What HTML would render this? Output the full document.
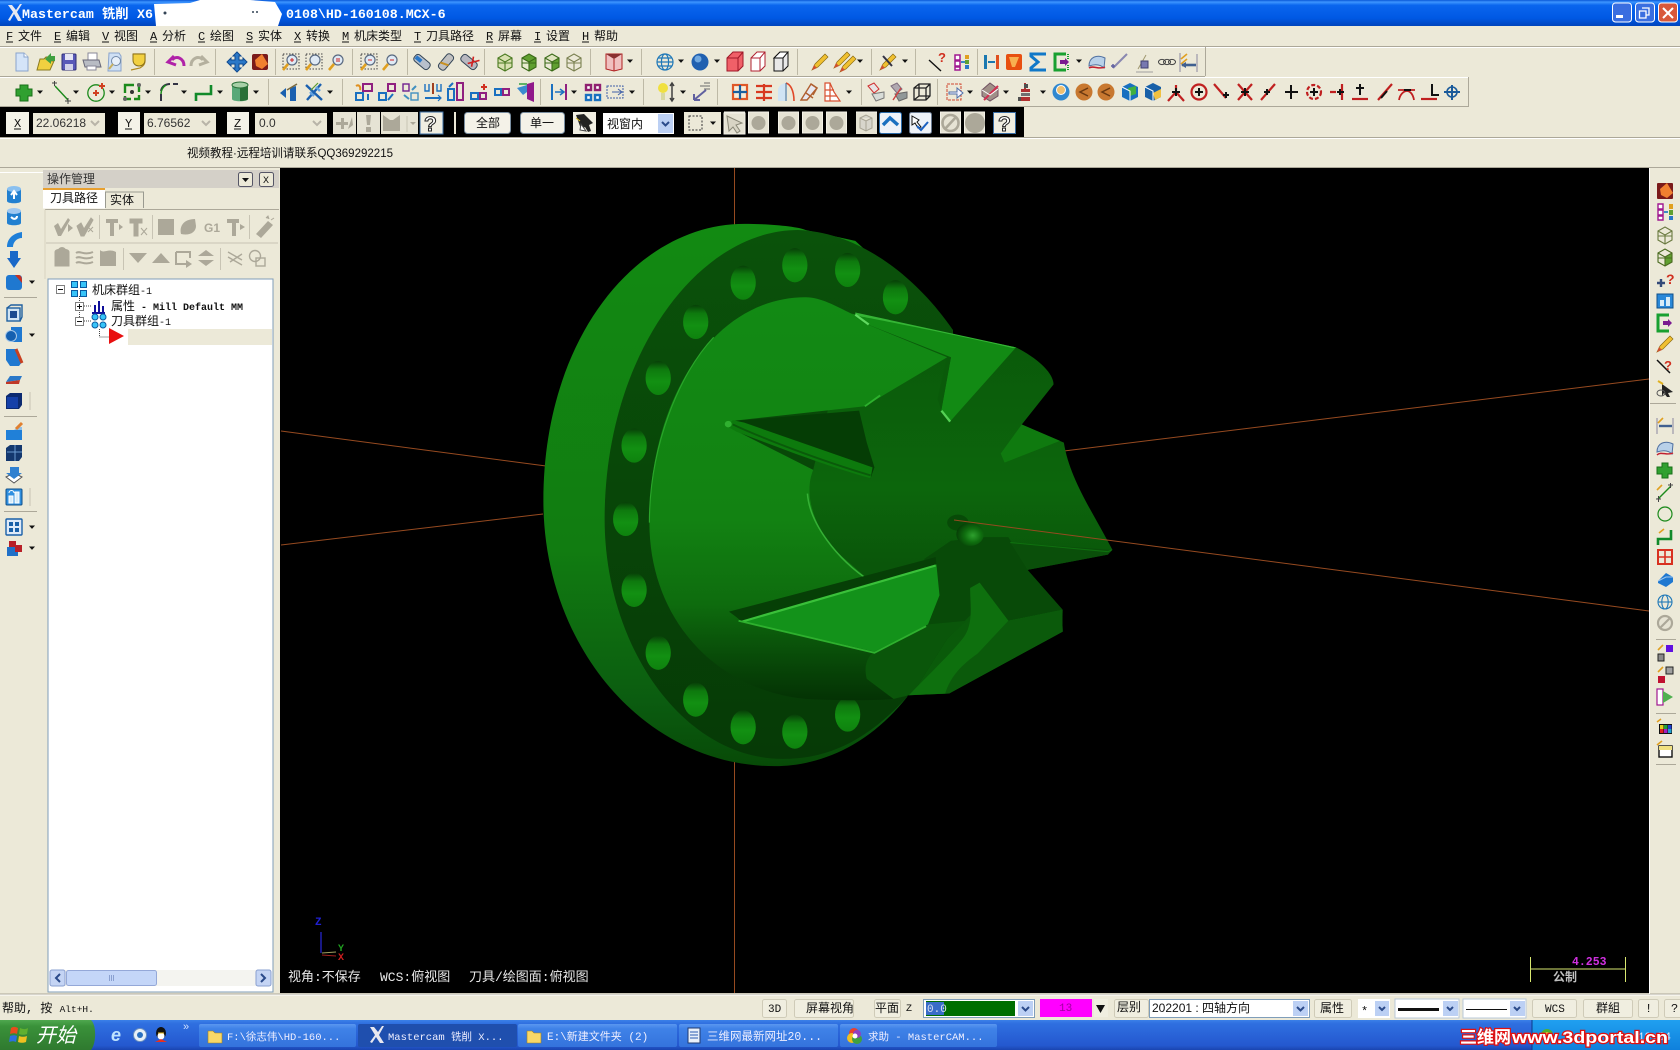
<!DOCTYPE html>
<html><head><meta charset="utf-8"><title>Mastercam 铣削 X6</title>
<style>
html,body{margin:0;padding:0;background:#ece9d8;overflow:hidden}
svg{display:block}
text{font-family:"Liberation Mono","Noto Sans CJK SC",monospace;font-size:12px;fill:#111}
.s{font-family:"Liberation Sans","Noto Sans CJK SC",sans-serif}
.t{font-weight:bold;font-size:13.3px;fill:#fff}
.w{fill:#e8e8e8;font-size:13px}
</style></head><body>
<svg width="1680" height="1050" viewBox="0 0 1680 1050" xmlns="http://www.w3.org/2000/svg">
<defs>
<linearGradient id="tb" x1="0" y1="0" x2="0" y2="1"><stop offset="0" stop-color="#0a58d8"/><stop offset=".08" stop-color="#3d95ff"/><stop offset=".2" stop-color="#0a66ee"/><stop offset=".7" stop-color="#0058e4"/><stop offset="1" stop-color="#0044bc"/></linearGradient>
<linearGradient id="tk" x1="0" y1="0" x2="0" y2="1"><stop offset="0" stop-color="#3a80e8"/><stop offset=".12" stop-color="#2f6fe0"/><stop offset=".85" stop-color="#2458cf"/><stop offset="1" stop-color="#1a45b0"/></linearGradient>
<linearGradient id="tb2" x1="0" y1="0" x2="0" y2="1"><stop offset="0" stop-color="#5a97f0"/><stop offset=".2" stop-color="#3f82e8"/><stop offset="1" stop-color="#3473dc"/></linearGradient>
<linearGradient id="st" x1="0" y1="0" x2="0" y2="1"><stop offset="0" stop-color="#4fa84f"/><stop offset=".2" stop-color="#3a923a"/><stop offset="1" stop-color="#2f7a2f"/></linearGradient>
<linearGradient id="try" x1="0" y1="0" x2="0" y2="1"><stop offset="0" stop-color="#20a0f0"/><stop offset="1" stop-color="#0f80dc"/></linearGradient>
<linearGradient id="rim" gradientUnits="userSpaceOnUse" x1="0" y1="40" x2="0" y2="1530"><stop offset="0" stop-color="#128a12"/><stop offset=".6" stop-color="#117c11"/><stop offset=".88" stop-color="#0b5c10"/><stop offset="1" stop-color="#074a07"/></linearGradient>
<linearGradient id="face" gradientUnits="userSpaceOnUse" x1="0" y1="55" x2="0" y2="1510"><stop offset="0" stop-color="#0a520a"/><stop offset="1" stop-color="#063a06"/></linearGradient>
<linearGradient id="hub" gradientUnits="userSpaceOnUse" x1="0" y1="240" x2="0" y2="1350"><stop offset="0" stop-color="#128a14"/><stop offset=".55" stop-color="#128212"/><stop offset=".76" stop-color="#0e6c0e"/><stop offset=".92" stop-color="#074407"/><stop offset="1" stop-color="#043204"/></linearGradient>
<linearGradient id="body" gradientUnits="userSpaceOnUse" x1="0" y1="300" x2="0" y2="1340"><stop offset="0" stop-color="#0a580a"/><stop offset=".45" stop-color="#0c660c"/><stop offset=".65" stop-color="#0a560a"/><stop offset="1" stop-color="#0a5c0a"/></linearGradient>
<linearGradient id="hole" x1="0" y1="0" x2="0" y2="1"><stop offset="0" stop-color="#073f07"/><stop offset=".25" stop-color="#0e7a0e"/><stop offset=".6" stop-color="#129012"/><stop offset="1" stop-color="#0e820e"/></linearGradient>
<radialGradient id="ball" cx=".6" cy=".55" r=".6"><stop offset="0" stop-color="#2ea02e"/><stop offset=".5" stop-color="#0f6e0f"/><stop offset="1" stop-color="#063f06"/></radialGradient>
<path id="a" d="M-3,-1.5h6l-3,3.4z" fill="#111"/>
<ellipse id="h" cx="0" cy="0" rx="33" ry="47" fill="url(#hole)"/>
<g id="wire" fill="none" stroke-width="1.1"><path d="M-7,-4L0,-8L7,-4V5L0,9L-7,5ZM-7,-4L0,0L7,-4M0,0V9M-7,1L7,1"/></g>
<g id="mag"><circle cx="1" cy="-2" r="5" fill="#dfeaf5" stroke="#5a6a80" stroke-width="1.2"/><path d="M-3,2L-8,8" stroke="#e0a020" stroke-width="2.6"/></g>
<g id="pen"><path d="M-8,8L-5,2L5,-8L8,-5L-2,5Z" fill="#f0c030" stroke="#8a6a10" stroke-width=".7"/><path d="M-8,8L-6,3L-3,6Z" fill="#d05030"/></g>
<g id="gbk"><rect x="-10" y="-11" width="20" height="21" fill="#e6e3d4" stroke="#f4f2e8"/><circle cy="0" r="7" fill="#aca899"/></g>
<g id="wh"><rect x="-11" y="-11" width="22" height="21" fill="#f0eee2" stroke="#d8d4c0"/></g>
</defs>

<!-- base -->
<rect width="1680" height="1050" fill="#ece9d8"/>

<!-- title bar -->
<rect width="1680" height="26" fill="url(#tb)"/>
<path d="M8,20L13,12L8,5H12L16,10L20,4H22L17,12L22,21H18L14,14L10,21Z" fill="#e8e8f0"/>
<text x="22" y="18" class="t">Mastercam</text><text x="102" y="18" class="t">铣削</text><text x="137" y="18" class="t">X6</text>
<text x="286" y="18" class="t">0108\HD-160108.MCX-6</text>
<path d="M154,4L190,3L200,0H250L275,2L282,14L278,26H156Z" fill="#fff"/>
<circle cx="165" cy="13" r="1.5" fill="#345"/><circle cx="253" cy="12" r="1" fill="#345"/><circle cx="257" cy="12" r="1" fill="#345"/>
<g stroke="#fff" stroke-width="1">
<rect x="1612.5" y="3" width="19" height="19" rx="3" fill="#3a6ee0"/>
<rect x="1635.5" y="3" width="19" height="19" rx="3" fill="#3a6ee0"/>
<rect x="1658.5" y="3" width="19" height="19" rx="3" fill="#d8583a"/></g>
<rect x="1616" y="15" width="7" height="3" fill="#fff"/>
<path d="M1642,8h7v7h-3M1639.5,11h6.5v7h-6.5z" fill="none" stroke="#fff" stroke-width="1.3"/>
<path d="M1663,8L1673,18M1673,8L1663,18" stroke="#fff" stroke-width="2"/>

<!-- menu -->
<g>
<text x="6" y="40">F</text><text x="18" y="40">文件</text>
<text x="54" y="40">E</text><text x="66" y="40">编辑</text>
<text x="102" y="40">V</text><text x="114" y="40">视图</text>
<text x="150" y="40">A</text><text x="162" y="40">分析</text>
<text x="198" y="40">C</text><text x="210" y="40">绘图</text>
<text x="246" y="40">S</text><text x="258" y="40">实体</text>
<text x="294" y="40">X</text><text x="306" y="40">转换</text>
<text x="342" y="40">M</text><text x="354" y="40">机床类型</text>
<text x="414" y="40">T</text><text x="426" y="40">刀具路径</text>
<text x="486" y="40">R</text><text x="498" y="40">屏幕</text>
<text x="534" y="40">I</text><text x="546" y="40">设置</text>
<text x="582" y="40">H</text><text x="594" y="40">帮助</text>
</g>
<path d="M6,42h7M54,42h7M102,42h7M150,42h7M198,42h7M246,42h7M294,42h7M342,42h7M414,42h7M486,42h7M534,42h7M582,42h7" stroke="#111" stroke-width="1"/>

<!-- toolbar lines -->
<path d="M0,46.5H1680" stroke="#aca899"/><path d="M0,47.5H1680" stroke="#fff"/>
<path d="M0,76.5H1205M1205.5,47V76" stroke="#aca899"/>
<path d="M0,77.5H1468" stroke="#fff"/>
<path d="M0,106.5H1468M1468.5,77V107" stroke="#aca899"/>
<path d="M154.5,49V75M215.5,49V75M275.5,49V75M352.5,49V75M407.5,49V75M484.5,49V75M590.5,49V75M641.5,49V75M797.5,49V75M871.5,49V75M915.5,49V75M977.5,49V75" stroke="#bdb9a6"/>
<path d="M268.5,79V105M342.5,79V105M540.5,79V105M643.5,79V105M717.5,79V105M861.5,79V105M937.5,79V105" stroke="#bdb9a6"/>

<!-- toolbar 1 icons -->
<g transform="translate(22,62)"><path d="M-6,-9h8l4,4v14h-12z" fill="#d4e4f8" stroke="#8aa4cc"/><path d="M2,-9v4h4" fill="#fff" stroke="#8aa4cc"/></g>
<g transform="translate(46,62)"><path d="M-9,8L-6,-3H-2L0,-5H4V-1H8L4,8Z" fill="#f0d040" stroke="#8a7a20"/><path d="M-1,-3L5,-9V-6L9,-6V-1L5,-1V2Z" fill="#40a040"/></g>
<g transform="translate(69,62)"><rect x="-7" y="-8" width="14" height="16" rx="1" fill="#5858b8" stroke="#303078"/><rect x="-4" y="-8" width="8" height="6" fill="#e4e4f4"/><rect x="-4" y="2" width="8" height="6" fill="#d0d0e8"/></g>
<g transform="translate(92,62)"><rect x="-4" y="-9" width="9" height="7" fill="#fff" stroke="#889"/><path d="M-9,-2H7L9,5H-7Z" fill="#b8bcc4" stroke="#667"/><rect x="-5" y="4" width="9" height="4" fill="#fff" stroke="#889"/></g>
<g transform="translate(115,62)"><path d="M-6,-9h10l2,3v15h-13z" fill="#cfe0f4" stroke="#8aa4cc"/><circle cx="1" cy="-1" r="4.5" fill="#e8f0fa" stroke="#7088a8"/><path d="M-2,2L-6,7" stroke="#c8b060" stroke-width="2"/></g>
<g transform="translate(139,62)"><path d="M-6,-8H6V-1C6,4 2,5 1,6L-8,8" fill="none" stroke="#b08a20" stroke-width="1.2"/><path d="M-6,-8H6V-2C6,2 3,4 0,4C-3,4 -6,2 -6,-2Z" fill="#f2d040" stroke="#8a7018"/></g>
<path d="M184,66C184,58 176,55 172,60M176,65L168,62L174,56" fill="none" stroke="#b022a8" stroke-width="3"/>
<path d="M191,66C191,58 199,55 203,60M199,65L207,62L201,56" fill="none" stroke="#b4b09e" stroke-width="3"/>
<g transform="translate(237,62)"><path d="M0,-10L4,-6H2V-2H6V-4L10,0L6,4V2H2V6H4L0,10L-4,6H-2V2H-6V4L-10,0L-6,-4V-2H-2V-6H-4Z" fill="#2a78c8" stroke="#104a90"/></g>
<g transform="translate(260,62)"><rect x="-8" y="-8" width="16" height="16" rx="2" fill="#7a1a1a"/><path d="M-5,-2L2,-8L8,2L2,7L-4,4Z" fill="#f08030"/></g>
<g transform="translate(291,62)"><rect x="-8" y="-8" width="16" height="15" fill="none" stroke="#444" stroke-dasharray="1.5 1.5"/><use href="#mag"/><path d="M-1,-2h4M1,-4v4" stroke="#d02020"/></g>
<g transform="translate(314,62)"><rect x="-8" y="-8" width="16" height="15" fill="none" stroke="#444" stroke-dasharray="1.5 1.5"/><use href="#mag"/></g>
<g transform="translate(337,62)"><use href="#mag"/><path d="M-1,-3h4M-1,-1h4" stroke="#d02020"/></g>
<g transform="translate(369,62)"><rect x="-8" y="-8" width="16" height="15" fill="none" stroke="#444" stroke-dasharray="1.5 1.5"/><use href="#mag"/><path d="M-1,-2h4" stroke="#d02020"/></g>
<g transform="translate(391,62)"><use href="#mag"/><path d="M-1,-2h4" stroke="#d02020"/></g>
<g transform="translate(422,62) rotate(40)"><rect x="-9" y="-4" width="18" height="8" rx="3" fill="#b8c0cc" stroke="#345"/><rect x="-8" y="-2" width="7" height="4" fill="#2a78c8"/></g>
<g transform="translate(446,62) rotate(-50)"><rect x="-9" y="-4" width="18" height="8" rx="3" fill="#c0c0c0" stroke="#345"/><path d="M-4,-4L-1,4" stroke="#c89020" stroke-width="2"/></g>
<g transform="translate(469,62) rotate(40)"><rect x="-9" y="-4" width="18" height="8" rx="3" fill="#b8b8c0" stroke="#345"/><path d="M0,-7L5,2M7,-8L0,2" stroke="#d02020" stroke-width="1.6"/></g>
<g transform="translate(505,62)"><path d="M-7,-4L0,-8L7,-4V5L0,9L-7,5Z" fill="#d8e0b0"/><use href="#wire" stroke="#4a7a20"/></g>
<g transform="translate(529,62)"><path d="M-7,-4L0,-8L7,-4V5L0,9L-7,5Z" fill="#60a030"/><path d="M-7,-4L0,0V9L-7,5Z" fill="#e8ecd0"/><use href="#wire" stroke="#3a6a18"/></g>
<g transform="translate(552,62)"><path d="M0,0L7,-4V5L0,9Z" fill="#60a030"/><path d="M-7,-4L0,-8L7,-4L0,0Z" fill="#e0e4c0"/><use href="#wire" stroke="#3a6a18"/></g>
<g transform="translate(574,62)"><use href="#wire" stroke="#7a8050"/></g>
<g transform="translate(614,62)"><path d="M-8,-8H8V7L0,9L-8,7Z" fill="#f0c0c0" stroke="#b02020"/><path d="M-8,-8H8L0,-3Z" fill="#8a3030"/><path d="M0,-3V9" stroke="#b02020"/></g>
<use href="#a" x="630" y="61"/>
<g transform="translate(665,62)" fill="none" stroke="#1f78b8" stroke-width="1.2"><circle r="8"/><ellipse rx="3.6" ry="8"/><path d="M-8,0H8M-7,-4H7M-7,4H7"/></g>
<use href="#a" x="681" y="61"/>
<circle cx="700" cy="62" r="8.5" fill="#2060b0"/><circle cx="698" cy="59" r="3.5" fill="#70a8e0"/>
<use href="#a" x="717" y="61"/>
<path d="M727,58L733,52H743V66L738,71H727Z" fill="#f06068" stroke="#a01828"/><path d="M727,58H738V71M738,58L743,52" fill="none" stroke="#a01828"/>
<path d="M751,58L757,52H765V66L760,71H751Z" fill="#fff" stroke="#b02030"/><path d="M751,58H760V71M760,58L765,52" fill="none" stroke="#b02030"/>
<path d="M774,58L780,52H788V66L783,71H774Z" fill="#e8e8e8" stroke="#111"/><path d="M780,52L774,58H783L788,52ZM783,58V71" fill="#fff" stroke="#111"/>
<use href="#pen" transform="translate(820,62)"/>
<use href="#pen" transform="translate(842,60)"/><use href="#pen" transform="translate(848,64)"/>
<use href="#a" x="860" y="61"/>
<use href="#pen" transform="translate(888,62)"/><path d="M883,56L892,66" stroke="#334" stroke-width="2"/>
<use href="#a" x="905" y="61"/>
<g transform="translate(938,62)"><path d="M-9,-2L3,9" stroke="#111" stroke-width="1.4"/></g><text x="938" y="62" class="s" style="font-size:13px;font-weight:bold;fill:#d03020">?</text>
<g transform="translate(961,62)"><path d="M-6,-7h5v5h-5zM-6,-1h5v5h-5zM-6,5h5v3h-5z" fill="#fff" stroke="#a01890" stroke-width="1.5"/><path d="M4,-7h4v4h-4z" fill="#e0a020"/><path d="M4,-2h4v4h-4z" fill="#60a030"/><path d="M4,3h4v4h-4z" fill="#2a78c8"/><path d="M0,0h4" stroke="#1070c0" stroke-width="1.6"/></g>
<g transform="translate(991,62)"><rect x="-7" y="-7" width="3" height="14" fill="#1a78b0"/><rect x="5" y="-7" width="3" height="14" fill="#e05020"/><path d="M-3,0H4" stroke="#1a78b0" stroke-width="2"/></g>
<g transform="translate(1014,62)"><rect x="-8" y="-8" width="16" height="16" fill="#e85010" rx="2"/><path d="M-5,-5H5L1,5H-2Z" fill="#f8b050"/></g>
<path d="M1046,54H1031V56L1038,62L1031,68V70H1046" fill="none" stroke="#1078c8" stroke-width="3"/>
<g transform="translate(1062,62)"><path d="M4,-8H-7V8H4" fill="none" stroke="#18a030" stroke-width="3"/><path d="M-2,-2H3V-4L7,0L3,4V2H-2Z" fill="#7a1a90"/><path d="M6,-8V-3M6,3V8" stroke="#18a030" stroke-dasharray="1 1" stroke-width="2"/></g>
<use href="#a" x="1079" y="61"/>
<g transform="translate(1097,62)"><path d="M-8,4C-8,-5 0,-8 8,-4L7,6C3,2 -2,2 -8,4Z" fill="#b8d0e8" stroke="#5070a0"/><path d="M-8,6C-4,3 2,8 8,5" fill="none" stroke="#c02030" stroke-width="1.5"/></g>
<g transform="translate(1120,62)"><path d="M-7,6L7,-8" stroke="#8a88b0" stroke-width="2"/><path d="M-5,4h-4M-7,2v4" stroke="#6060a0" stroke-width="1.5"/></g>
<g transform="translate(1144,63)"><path d="M-8,9H9" stroke="#a0a0a0"/><path d="M-6,6L2,-8" stroke="#a09870"/><rect x="-3" y="-2" width="7" height="7" fill="#7878b0" stroke="#404070"/></g>
<g transform="translate(1166,62)" fill="none" stroke="#444"><ellipse cx="-4" rx="3.5" ry="2.6"/><ellipse cx="1" rx="3.5" ry="2.6"/><ellipse cx="6" rx="3.5" ry="2.6"/></g>
<g transform="translate(1189,62)"><path d="M-9,-9V10" stroke="#8a88a0"/><path d="M8,-8V10" stroke="#8a88a0"/><path d="M-8,2L-2,-3M-8,-3L-2,-8" stroke="#e0a020" stroke-width="1.6"/><path d="M-7,3H7" stroke="#406090" stroke-width="2.6"/><path d="M-3,0L-8,3L-3,6" fill="#406090"/></g>

<!-- toolbar 2 icons -->
<path d="M20,85h8v4h-0v0h4v7h-4v5h-8v-5h-4v-7h4z" fill="#30a030" stroke="#177017" transform="translate(0,0)"/>
<use href="#a" x="40" y="92"/>
<g transform="translate(61,92)"><path d="M-6,-6L7,8" stroke="#1b8a1b" stroke-width="1.4"/><path d="M-9,-9h5M-6.5,-11v5M4,9h6M7,6v6" stroke="#444" stroke-width="1"/></g>
<use href="#a" x="76" y="92"/>
<g transform="translate(96,93)"><circle r="8.2" fill="none" stroke="#1b8a1b" stroke-width="1.3"/><path d="M-3,0H3M0,-3V3" stroke="#d04020" stroke-width="2"/><path d="M3,-7H9M6,-10V-4" stroke="#d04020" stroke-width="2"/></g>
<use href="#a" x="112" y="92"/>
<g transform="translate(132,92)"><path d="M-7,-7H7V7H-7Z" fill="none" stroke="#1b8a1b" stroke-width="2.4" stroke-dasharray="9 3"/><circle r="2" fill="#333"/><circle cx="-7" cy="7" r="2" fill="#666"/><circle cx="7" cy="-7" r="2" fill="#666"/></g>
<use href="#a" x="148" y="92"/>
<path d="M161,101V94M161,91C162,86 166,84 170,84M173,84H178" fill="none" stroke="#334" stroke-width="2"/><path d="M161,94C161,90 163,87 166,85" fill="none" stroke="#1b8a1b" stroke-width="1.5"/>
<use href="#a" x="184" y="92"/>
<path d="M196,101V94H211V85" fill="none" stroke="#118a2a" stroke-width="2.6"/>
<use href="#a" x="220" y="92"/>
<g transform="translate(240,92)"><path d="M-8,-7V7C-8,10 8,10 8,7V-7Z" fill="#58a878"/><path d="M0,-6V9C4,9 8,8 8,7V-7Z" fill="#2a7038"/><ellipse cy="-7" rx="8" ry="3" fill="#a8d0a8" stroke="#2a7038"/></g>
<use href="#a" x="256" y="92"/>
<g transform="translate(289,92)"><path d="M-9,1L-3,-4V6ZM1,-4V9H7V-6Z" fill="#1a60b0"/><path d="M-2,-2L8,-8" stroke="#7a6a40" stroke-width="1.5"/></g>
<g transform="translate(314,92)" stroke-width="2.4"><path d="M-8,-7L8,8" stroke="#1a60b0"/><path d="M7,-8L-7,8" stroke="#1a60b0"/><path d="M-4,0L0,4M2,-5L6,-1" stroke="#60a0e0"/><path d="M4,-9L-3,-2" stroke="#5a9a30" stroke-width="1.2"/></g>
<use href="#a" x="330" y="92"/>
<g fill="none" stroke-width="2">
<g transform="translate(364,92)"><rect x="-1" y="-8" width="9" height="7" stroke="#902080"/><rect x="-8" y="1" width="7" height="7" stroke="#1a70c0"/><path d="M-8,-6C-5,-8 -3,-5 -4,-2" stroke="#e09020"/><path d="M4,2V8" stroke="#1a70c0"/></g>
<g transform="translate(387,92)"><rect x="1" y="-8" width="7" height="7" stroke="#902080"/><rect x="-8" y="1" width="7" height="7" stroke="#1a70c0"/><path d="M1,8L6,2" stroke="#1a70c0"/></g>
<g transform="translate(411,92)"><rect x="-8" y="-8" width="6" height="7" stroke="#702090" stroke-width="1.4"/><rect x="0" y="1" width="7" height="7" stroke="#4090c0" stroke-width="1.4"/><path d="M-7,3L-2,7M5,-6L1,-2" stroke="#4090c0"/></g>
<g transform="translate(433,92)"><path d="M-8,-8V-1H-4V-8M4,-8V-1H8V-8" stroke="#1a70c0" stroke-width="1.4"/><path d="M0,-9V2" stroke="#a04020"/><path d="M-8,6H8" stroke="#1a70c0"/><path d="M5,3L8,6L5,9" stroke="#1a70c0" stroke-width="1.2"/></g>
<g transform="translate(456,92)"><rect x="-8" y="-3" width="6" height="11" stroke="#1a70c0"/><rect x="1" y="-9" width="6" height="17" stroke="#902080"/><path d="M-7,-5L-3,-9" stroke="#1a70c0"/></g>
<g transform="translate(479,92)"><rect x="-8" y="1" width="7" height="6" stroke="#1a70c0"/><rect x="1" y="1" width="6" height="6" stroke="#902080"/><path d="M2,-5H8M5,-8V-2" stroke="#d03020"/></g>
<g transform="translate(502,92)"><rect x="-7" y="-3" width="6" height="6" stroke="#1a70c0"/><rect x="1" y="-3" width="6" height="6" stroke="#902080"/></g>
</g>
<g transform="translate(525,92)"><path d="M2,-8L9,-10V10L2,7Z" fill="#90188a"/><path d="M-8,-4L2,-7V0L-2,3Z" fill="#3a8ad0"/><path d="M-6,-8L2,-8" stroke="#30a040" stroke-width="1.5"/></g>
<g transform="translate(560,92)"><path d="M-8,-8V8" stroke="#1a70c0" stroke-width="2"/><path d="M-5,0H3M0,-3L4,0L0,3" stroke="#1a70c0" fill="none" stroke-width="1.5"/><path d="M6,-8V8" stroke="#902080" stroke-width="2"/></g>
<use href="#a" x="574" y="92"/>
<g fill="#fff" stroke-width="2.4"><rect x="586" y="85" width="5" height="5" stroke="#902070"/><rect x="595" y="85" width="5" height="5" stroke="#902070"/><rect x="586" y="95" width="5" height="5" stroke="#1a70c0"/><rect x="595" y="95" width="5" height="5" stroke="#1a70c0"/></g>
<g transform="translate(616,92)" fill="none"><rect x="-9" y="-6" width="16" height="12" stroke="#4060a8" stroke-dasharray="2 1"/><path d="M-4,0H5M2,-3L6,0L2,3" stroke="#4060a8"/></g>
<use href="#a" x="632" y="92"/>
<g transform="translate(667,92)"><circle cx="-4" cy="-4" r="5" fill="#f0e040"/><path d="M-6,1V8H-2V1Z" fill="#d8d8a0"/><path d="M5,-9V9M3,-6L5,-9L7,-6M3,6L5,9L7,6" stroke="#404040" fill="none" stroke-width="1.5"/></g>
<use href="#a" x="683" y="92"/>
<g transform="translate(702,92)" fill="none"><path d="M-8,8L4,-2M-8,8V2M-8,8H-2" stroke="#6060a0" stroke-width="2"/><path d="M-2,-6H8M2,-9H8M2,-3H8" stroke="#6a6a6a" stroke-width="1"/></g>
<g fill="none" stroke-width="2.2">
<rect x="733" y="85" width="14" height="14" stroke="#e05828" fill="#f8ecd8"/><path d="M733,92H747M740,85V99" stroke="#1a60a0"/>
<path d="M756,86H772M756,92H772M756,98H772M764,84V101" stroke="#d83820"/>
</g>
<g transform="translate(786,92)"><path d="M-8,9V-3C-6,-8 -3,-8 -1,-9V9Z" fill="#d0e4f4"/><path d="M0,-9C4,-8 8,-2 8,9" fill="none" stroke="#e04828" stroke-width="1.6"/><path d="M0,-9V9Z" stroke="#2a68a8"/></g>
<g transform="translate(809,92)" fill="none" stroke="#b06030" stroke-width="1.4"><path d="M-8,8L2,-8L8,-4L-2,8Z" fill="#e8e8f0"/><path d="M-3,1L4,6M2,-8L8,-4L4,3"/></g>
<g transform="translate(832,92)" fill="#fff" stroke="#d85030" stroke-width="1.2"><path d="M-7,-9V9H8L2,0L-2,-9Z"/><path d="M-7,-2H2M-7,4H5M-2,-9V9"/></g>
<use href="#a" x="849" y="92"/>
<g transform="translate(876,92)"><path d="M-8,-6L-2,-9L3,-3L-2,1Z" fill="#e8e4e4" stroke="#d03030"/><path d="M-4,2L8,0L8,6L0,9Z" fill="#d8dcd8" stroke="#787878"/></g>
<g transform="translate(899,92)"><path d="M-8,-6L-2,-9L3,-3L-2,1Z" fill="#b0a8b0" stroke="#807080"/><path d="M-4,2L8,0L8,6L0,9Z" fill="#909898" stroke="#686868"/><path d="M-6,8L2,-4" stroke="#d04040" stroke-width="1.4"/></g>
<g transform="translate(922,92)" fill="none" stroke="#222" stroke-width="1.3"><path d="M-8,-4L-3,-8H8V4L4,8H-8ZM-8,-4H4V8M4,-4L8,-8M-3,-8V4H8M-3,4L-8,8"/></g>
<g transform="translate(955,92)" fill="none"><rect x="-8" y="-8" width="14" height="16" stroke="#d04830" stroke-dasharray="3 1"/><path d="M-6,0H2V-4L8,1L2,6V2H-6Z" fill="#f4f4ff" stroke="#5070a8"/></g>
<use href="#a" x="970" y="92"/>
<g transform="translate(990,92)"><path d="M-8,-2L0,-9L8,-3L8,4L0,9L-8,4Z" fill="#a09088" stroke="#705060"/><path d="M-6,8L8,-6" stroke="#d03050" stroke-width="2"/><path d="M-8,-2L0,3L8,-3" stroke="#fff" fill="none"/></g>
<use href="#a" x="1006" y="92"/>
<g transform="translate(1026,92)"><rect x="-5" y="-3" width="9" height="3" fill="#b03030"/><rect x="-5" y="1" width="9" height="3" fill="#707070"/><rect x="-5" y="5" width="9" height="4" fill="#b03030"/><path d="M-1,-9V-3" stroke="#b03030" stroke-width="2"/><rect x="-2" y="-8" width="4" height="4" fill="#505050"/><rect x="-8" y="5" width="3" height="4" fill="#505050"/></g>
<use href="#a" x="1043" y="92"/>
<circle cx="1061" cy="92" r="8.5" fill="#3088d0"/><circle cx="1061" cy="90" r="4.5" fill="#f0c070" stroke="#fff"/>
<circle cx="1084" cy="92" r="8.5" fill="#c87830"/><path d="M1088,88L1080,92L1088,96" fill="none" stroke="#6a3810" stroke-width="1.5"/>
<circle cx="1106" cy="92" r="8.5" fill="#c87830"/><path d="M1110,88L1102,92L1110,96" fill="none" stroke="#6a3810" stroke-width="1.5"/>
<g transform="translate(1130,92)"><path d="M-8,-5L0,-9L8,-5V5L0,9L-8,5Z" fill="#1870c0"/><path d="M-2,-4L6,-6V2L0,4Z" fill="#40b040"/><path d="M-8,-5L0,-1V9" stroke="#fff" fill="none"/></g>
<g transform="translate(1153,92)"><path d="M-8,-5L0,-9L8,-5V5L0,9L-8,5Z" fill="#1860a8"/><path d="M0,1L8,-3V5L2,8Z" fill="#f0c040"/><path d="M-8,-5L0,-1V9" stroke="#fff" fill="none"/></g>
<g stroke="#c02020" stroke-width="2.2" fill="none">
<path d="M1176,92L1168,101M1176,92L1184,101M1176,85V90"/>
<circle cx="1199" cy="92" r="7.5"/>
<path d="M1214,84L1226,98"/>
<path d="M1238,84L1252,100M1252,84L1238,100"/>
<path d="M1261,100L1275,84"/>
<circle cx="1314" cy="92" r="7" stroke-dasharray="4 2"/>
<path d="M1330,92H1336M1342,84V100"/>
<path d="M1352,99H1368"/>
<path d="M1378,100L1392,84"/>
<path d="M1398,90H1415M1399,100C1400,94 1404,91 1407,91C1410,91 1413,94 1414,100" stroke-width="1.8"/>
<path d="M1421,99H1437"/>
</g>
<path d="M1172,92h8M1176,88v8M1195,92h8M1199,88v8M1223,95h6M1226,92v6M1241,92h8M1245,88v8M1264,92h6M1267,89v6M1285,92h13M1291,85v14M1310,92h8M1314,88v8M1337,92h7M1340,89v6M1360,84v11M1356,88h8M1387,91l-6,7M1404,90h7M1432,84v11H1439" stroke="#111" stroke-width="2" fill="none"/>
<path d="M1452,85V100M1444,92H1460" stroke="#1a5a9a" stroke-width="2"/><circle cx="1452" cy="92" r="5" fill="none" stroke="#1a5a9a" stroke-width="1.6"/>

<!-- black toolbar -->
<rect x="0" y="107" width="1024" height="30" fill="#000"/>
<path d="M0,137.5H1680" stroke="#aca899"/><path d="M0,138.5H1680" stroke="#fff"/>
<g fill="#f4f2e8"><rect x="6" y="112" width="23" height="22"/><rect x="118" y="112" width="22" height="22"/><rect x="227" y="112" width="22" height="22"/></g>
<text x="14" y="127">X</text><text x="125" y="127">Y</text><text x="234" y="127">Z</text>
<path d="M14,129h7M125,129h7M234,129h7" stroke="#111"/>
<g fill="#ece9d8"><rect x="33" y="113" width="72" height="21"/><rect x="144" y="113" width="72" height="21"/><rect x="255" y="113" width="72" height="21"/></g>
<g class="s"><text x="36" y="127" class="s" style="fill:#333">22.06218</text><text x="147" y="127" class="s" style="fill:#333">6.76562</text><text x="259" y="127" class="s" style="fill:#333">0.0</text></g>
<path d="M91,121l4,4l4,-4M202,121l4,4l4,-4M313,121l4,4l4,-4" fill="none" stroke="#b8b4a8" stroke-width="2"/>
<g fill="#e6e3d4"><rect x="333" y="112" width="23" height="22"/><rect x="357" y="112" width="23" height="22"/><rect x="381" y="112" width="37" height="22"/><rect x="420" y="112" width="23" height="22" fill="#f0eee2" stroke="#3a6ea5"/></g>
<path d="M336,122h5v-4h3v4h4v3h-4v4h-3v-4h-5zM348,129l4,-12l1,8z" fill="#aca899"/>
<path d="M366,115h5l-1,10h-3zM366,127h5v5h-5z" fill="#aca899"/>
<path d="M383,115l7,5h3l7,-5v16h-17z" fill="#aca899"/>
<path d="M407,116v16" stroke="#c8c4b4"/><path d="M410,122h6l-3,3z" fill="#aca899"/>
<text x="424" y="131" class="s" style="font-size:21px;font-weight:bold;fill:#fff;stroke:#222;stroke-width:1">?</text>
<rect x="454" y="112" width="2" height="22" fill="#ece9d8"/>
<g fill="#f4f2e8" stroke="#7a8ea0"><rect x="464.5" y="112.5" width="46" height="21" rx="3"/><rect x="520.5" y="112.5" width="44" height="21" rx="3"/></g>
<text x="476" y="127">全部</text><text x="530" y="127">单一</text>
<rect x="573" y="112" width="23" height="22" fill="#f0eee2"/><path d="M576,115l8,-1l9,9l-4,2l2,6l-3,1l-3,-5l-4,2z" fill="#222"/><path d="M581,124l5,7l-6,-1z" fill="#fff" stroke="#444"/><path d="M576,118l4,3" stroke="#e0c020"/>
<rect x="603" y="113" width="71" height="21" fill="#fff"/><rect x="658" y="114" width="15" height="19" fill="#bcd0f4"/><path d="M662,122l3.5,3.5l3.5,-3.5" fill="none" stroke="#2a4a8a" stroke-width="2"/>
<text x="607" y="128">视窗内</text>
<rect x="684" y="112" width="37" height="22" fill="#ece9d8"/><rect x="689" y="116" width="13" height="14" fill="none" stroke="#333" stroke-dasharray="2 1.5"/><use href="#a" x="713" y="123"/>
<use href="#gbk" x="734.5" y="123"/><use href="#gbk" x="758.5" y="123"/><use href="#gbk" x="788.5" y="123"/><use href="#gbk" x="812.5" y="123"/><use href="#gbk" x="836.5" y="123"/><use href="#gbk" x="866.5" y="123"/><use href="#gbk" x="950.5" y="123"/><use href="#gbk" x="974.5" y="123"/>
<path d="M724,113h21v21h-21z" fill="#e6e3d4" stroke="#f4f2e8"/><path d="M727,116l15,7l-6,2l4,6l-3,2l-4,-6l-4,4z" fill="#d8d4c4" stroke="#8a8878"/>
<path d="M856,113h21v21h-21z" fill="#e6e3d4"/><path d="M860,118l6,-3l6,3v10l-6,3l-6,-3zM860,118l6,3l6,-3M866,121v10" fill="#d8d6cc" stroke="#a8a494"/>
<circle cx="950.5" cy="123" r="8" fill="#e6e3d4" stroke="#aca899" stroke-width="2.6"/><path d="M945,129l11,-12" stroke="#aca899" stroke-width="2.6"/>
<circle cx="975" cy="123" r="10" fill="#aca899"/>
<rect x="879.5" y="112.5" width="22" height="21" rx="2" fill="#eef2f8" stroke="#2a6aa8"/><path d="M883,125l7,-7l8,7" fill="none" stroke="#1a70c0" stroke-width="3.4"/>
<rect x="909.5" y="112.5" width="22" height="21" rx="2" fill="#eef2f8" stroke="#6a7a90"/><path d="M912,116l7,4l-2,2l4,5l-3,1l-3,-5l-3,2z" fill="#fff" stroke="#111"/><path d="M917,126l4,4l7,-8" fill="none" stroke="#1a60c0" stroke-width="2"/>
<rect x="993.5" y="112.5" width="22" height="21" fill="#f0eee2" stroke="#3a6ea5"/>
<text x="998" y="131" class="s" style="font-size:21px;font-weight:bold;fill:#fff;stroke:#222;stroke-width:1">?</text>

<!-- hint row -->
<text x="187" y="157" class="s" textLength="206" lengthAdjust="spacingAndGlyphs">视频教程·远程培训请联系QQ369292215</text>
<path d="M0,167.5H1680" stroke="#aca899"/>

<!-- left toolbar -->
<path d="M0,172.5H43" stroke="#fff"/>
<path d="M4,297.5H37M4,416.5H37M4,511.5H37" stroke="#aca899"/><path d="M30,392V410M30,488V506" stroke="#c8c4b4"/>
<g transform="translate(14,195)"><path d="M-7,-6V6C-7,9 7,9 7,6V-6Z" fill="#2280d0"/><ellipse cy="-6" rx="7" ry="3" fill="#8ac0f0"/><path d="M0,4V-3M-3,0L0,-4L3,0" stroke="#fff" stroke-width="2" fill="none"/></g>
<g transform="translate(14,217)"><path d="M-7,-6V6C-7,9 7,9 7,6V-6Z" fill="#2280d0"/><ellipse cy="-6" rx="7" ry="3" fill="#a0c8f0"/><path d="M-3,0C0,3 3,2 3,-1" stroke="#fff" stroke-width="2" fill="none"/></g>
<path d="M7,247C7,238 14,233 22,232V238C17,238 13,242 13,247Z" fill="#1f7fd8"/>
<path d="M10,251V258H7L14,268L21,258H18V251Z" fill="#1a68c8"/>
<g transform="translate(14,282)"><rect x="-8" y="-7" width="16" height="15" rx="3" fill="#1f78d0"/><path d="M1,-7H5C8,-6 8,-3 8,1Z" fill="#c83020"/></g><use href="#a" x="32" y="282"/>
<g transform="translate(14,313)"><rect x="-7" y="-5" width="13" height="13" fill="#d0e4f4" stroke="#2060a0" stroke-width="1.4"/><rect x="-4" y="-2" width="7" height="7" fill="#1a4a90"/><path d="M-7,-5L-3,-8H8V4L6,8" fill="none" stroke="#2060a0" stroke-width="1.4"/></g>
<g transform="translate(14,335)"><rect x="-3" y="-8" width="11" height="15" fill="#1f78d0"/><circle cx="-3" cy="1" r="5.5" fill="#1560b0" stroke="#a8c8e8"/></g><use href="#a" x="32" y="335"/>
<path d="M6,349H16L22,362L19,366H10L6,360Z" fill="#1f78d0"/><path d="M16,349L22,363" stroke="#c84020" stroke-width="3"/>
<path d="M6,382L10,376H22L20,380Z" fill="#2a78c8"/><path d="M6,382L20,380L19,384H6Z" fill="#c03828"/>
<g transform="translate(14,401)"><path d="M-8,-5L-4,-8H8V4L5,8H-8Z" fill="#0c2a70"/><rect x="-7" y="-4" width="11" height="11" fill="#1540a8"/></g>
<g transform="translate(14,432)"><path d="M-8,-2H8V8H-8Z" fill="#2080d8"/><path d="M-8,-2H0L4,-5H8V-2Z" fill="#90c0e8"/><path d="M2,-3L8,-9" stroke="#e08030" stroke-width="3"/></g>
<g transform="translate(14,453)"><path d="M-8,-5L-4,-8H8V4L5,8H-8Z" fill="#14386e"/><path d="M-7,-1H8M1,-8V8" stroke="#6a9ad0"/></g>
<g transform="translate(14,475)"><path d="M-8,2L0,-2L8,2L0,8Z" fill="#fff" stroke="#555"/><path d="M-4,-8H5V-2H8L0,4L-8,-2H-4Z" fill="#3080d0"/></g>
<g transform="translate(14,497)"><rect x="-8" y="-8" width="16" height="16" rx="1" fill="#3090e0" stroke="#10508a"/><rect x="-5" y="-1" width="4" height="7" fill="#d8ecf8" stroke="#fff"/><rect x="1" y="-5" width="4" height="11" fill="#d8ecf8" stroke="#fff"/><path d="M-5,-4a2.5,2.5 0 0 1 5,0" fill="none" stroke="#fff"/></g>
<g transform="translate(14,527)"><rect x="-8" y="-8" width="16" height="16" rx="1" fill="#dfeaf8" stroke="#1a60a8" stroke-width="1.4"/><rect x="-5" y="-5" width="4" height="4" fill="#1a60a8"/><rect x="1" y="-5" width="4" height="4" fill="#1a60a8"/><rect x="-5" y="1" width="4" height="4" fill="#1a60a8"/><rect x="1" y="1" width="4" height="4" fill="#1a60a8"/></g><use href="#a" x="32" y="527"/>
<g transform="translate(14,548)"><rect x="-7" y="-1" width="11" height="9" fill="#2070c8"/><path d="M-5,-1V-7H2V-3H8V4H1V-1Z" fill="#b82028"/></g><use href="#a" x="32" y="548"/>

<!-- ops panel -->
<rect x="43" y="170" width="236" height="18" fill="#d4d0c8"/>
<text x="47" y="183" style="fill:#333">操作管理</text>
<rect x="238.5" y="172.5" width="14" height="14" rx="2" fill="#ece9d8" stroke="#556"/><path d="M242,178h7l-3.5,4z" fill="#111"/>
<rect x="259.5" y="172.5" width="14" height="14" rx="2" fill="#ece9d8" stroke="#556"/><text x="263" y="183" style="font-size:10px">X</text>
<path d="M43,208.5V189H105V208.5" fill="#fff"/><rect x="43" y="188" width="62" height="2" fill="#e8a030"/>
<path d="M105.5,208V192H143.5V208" fill="#ece9d8" stroke="#9a9a90"/>
<text x="50" y="202">刀具路径</text><text x="110" y="204">实体</text>
<path d="M45,209.5H279" stroke="#aca899"/><path d="M45,209.5V279" stroke="#d8d4c0"/>
<path d="M46,243H278" stroke="#c8c4b4"/>
<path d="M99.5,215V239M152.5,215V239M249.5,215V239M123.5,248V270M220.5,248V270" stroke="#c8c4b4"/>
<g fill="#aca899">
<path d="M54,226L58,223L61,229L68,218L70,220L61,236H58ZM68,224l5,4l-5,4z"/>
<path d="M77,226L81,223L84,229L91,218L93,220L84,236H81ZM88,227l5,5m0,-5l-5,5" stroke="#aca899"/>
<path d="M106,219H118V223H114V236H110V223H106ZM119,224l4,3l-4,3z"/>
<path d="M130,219H142V223H138V236H134V223H130ZM141,228l6,7m0,-7l-6,7" stroke="#aca899"/>
<rect x="158" y="219" width="16" height="16"/>
<path d="M181,234C179,226 184,219 195,219L196,226C196,232 190,236 181,234Z"/>
<text x="204" y="232" class="s" style="font-size:12px;font-weight:bold;fill:#aca899">G1</text>
<path d="M227,219H239V223H236V236H232V223H227ZM240,224l5,3l-5,3z"/>
<path d="M256,234l12,-13l5,4l-12,13z"/><path d="M266,218l2,-2l1,3M271,220l3,-2" stroke="#aca899"/>
<path d="M55,252C55,248 69,248 69,252V266H55ZM58,252C58,246 66,246 66,252" stroke="#aca899"/>
<path d="M100,250C104,254 108,248 116,252V266H100Z"/>
<path d="M129,253H147L138,263Z"/><path d="M152,263H170L161,253Z"/>
<path d="M198,256L206,250L214,256ZM198,260H214L206,266Z"/>
</g>
<path d="M76,253C80,250 84,256 93,252M76,258C80,255 84,261 93,257M76,263C80,260 84,266 93,262" fill="none" stroke="#aca899" stroke-width="2"/>
<path d="M176,252H190V258M176,252V264H186" fill="none" stroke="#aca899" stroke-width="2"/><path d="M186,260l6,4l-6,4z" fill="#aca899"/>
<path d="M228,252L242,260M228,257L242,265M230,262L242,254" fill="none" stroke="#aca899" stroke-width="1.4"/>
<circle cx="255" cy="256" r="5.5" fill="none" stroke="#aca899" stroke-width="1.4"/><rect x="256" y="258" width="9" height="8" fill="none" stroke="#aca899" stroke-width="1.4"/>

<!-- tree -->
<rect x="48" y="279" width="225" height="713" fill="#fff" stroke="#7f9db9"/>
<rect x="128" y="329" width="144" height="16" fill="#ece9d8"/>
<path d="M79.5,296V322M84,306H92M84,321H92M99.5,329V337H109" fill="none" stroke="#444" stroke-dasharray="1 1"/>
<g fill="#fff" stroke="#808080"><rect x="56.5" y="285.5" width="8" height="8"/><rect x="75.5" y="302.5" width="8" height="8"/><rect x="75.5" y="317.5" width="8" height="8"/></g>
<path d="M58,289.5h5M77,306.5h5M79.5,304v5M77,321.5h5" stroke="#111"/>
<g fill="#38c4f8" stroke="#0a5aa0"><rect x="71.5" y="281.5" width="6" height="6"/><rect x="80.5" y="281.5" width="6" height="6"/><rect x="71.5" y="290.5" width="6" height="6"/><rect x="80.5" y="290.5" width="6" height="6"/></g>
<text x="92" y="294">机床群组<tspan style="font-size:10px">-1</tspan></text>
<path d="M92,313H105M95,313V305M99,313V301M103,313V306" stroke="#10109a" stroke-width="2"/>
<text x="111" y="310">属性<tspan style="font-size:10px;font-weight:bold"> - Mill Default MM</tspan></text>
<g fill="#38c4f8" stroke="#0a5aa0"><circle cx="95" cy="317" r="3"/><circle cx="103" cy="317" r="3"/><circle cx="95" cy="325" r="3"/><circle cx="103" cy="325" r="3"/></g>
<text x="111" y="325">刀具群组<tspan style="font-size:10px">-1</tspan></text>
<path d="M109,328V344L124,336Z" fill="#e81010"/>

<!-- scrollbar -->
<rect x="50" y="970" width="221" height="16" fill="#f4f4f0"/>
<rect x="50" y="970" width="15" height="16" rx="2" fill="#c4d4f4" stroke="#8aa0d0"/><rect x="256" y="970" width="15" height="16" rx="2" fill="#c4d4f4" stroke="#8aa0d0"/>
<rect x="66.5" y="970.5" width="90" height="15" rx="2" fill="#c4d6f8" stroke="#94a8d8"/>
<path d="M60,974l-4,4l4,4M261,974l4,4l-4,4" fill="none" stroke="#2a4a8a" stroke-width="2"/>
<path d="M109.5,975v6M111.5,975v6M113.5,975v6" stroke="#8aa0d0"/>

<!-- viewport -->
<rect x="280" y="168" width="1369" height="825" fill="#000"/>
<g stroke="#964a20" stroke-width="1" fill="none">
<path d="M734.5,168V993"/>
<path d="M281,431L546,466M281,545L543,514M1064,451L1649,379"/>
</g>

<!-- 3D part -->
<g transform="translate(530,210) scale(.3827,.3635)">
<path d="M35,800C35,350 280,38 560,38C620,38 700,45 720,55L850,85L1105,330L1105,1000L985,1340C880,1480 750,1530 640,1530C300,1530 35,1200 35,800Z" fill="url(#rim)"/>
<path d="M195,850C195,400 440,55 700,55C850,60 1000,170 1105,330L1105,1000L985,1340C880,1460 780,1510 660,1510C400,1510 195,1200 195,850Z" fill="url(#face)"/>
<use href="#h" x="692" y="152"/><use href="#h" x="830" y="165"/><use href="#h" x="955" y="240"/><use href="#h" x="557" y="200"/><use href="#h" x="433" y="308"/><use href="#h" x="335" y="462"/><use href="#h" x="272" y="648"/><use href="#h" x="250" y="850"/><use href="#h" x="272" y="1045"/><use href="#h" x="335" y="1218"/><use href="#h" x="433" y="1347"/><use href="#h" x="557" y="1423"/><use href="#h" x="692" y="1435"/><use href="#h" x="830" y="1388"/>
<path d="M840,285L1270,378C1330,410 1368,450 1368,480L1285,590L1395,640C1410,740 1470,830 1522,935L1510,948L1300,990L1392,1100L1390,1160L1095,1330L990,1335L950,1345L880,1290L885,1220L530,1000L740,715Z" fill="url(#body)"/>
<path d="M312,860C312,520 480,240 720,240C760,240 800,265 840,285L870,310L1090,405L875,540L530,580L515,595L740,715C715,780 740,860 790,930L890,1022L525,1105L555,1135L900,1215L880,1290L950,1345C900,1350 800,1350 720,1345C480,1320 312,1120 312,860Z" fill="url(#hub)"/>
<path d="M312,860C312,650 390,450 480,350" fill="none" stroke="#2aa52a" stroke-width="3"/>
<path d="M725,780C730,860 800,960 890,1022" fill="none" stroke="#35b035" stroke-width="4"/>
<!-- upper flute -->
<path d="M535,580L860,552L880,640L900,708L890,738L560,610Z" fill="#053d05"/>
<path d="M515,595L530,578L560,585L895,708L890,738C760,700 630,645 540,610Z" fill="#0d7a0d"/>
<path d="M530,590C600,625 760,690 890,730" stroke="#0a5a0a" stroke-width="5" fill="none"/>
<circle cx="518" cy="589" r="9" fill="#30b030"/>
<path d="M875,540L915,510" stroke="#2db02d" stroke-width="5"/>
<!-- top flute -->
<path d="M840,285L1270,378L1095,585L1075,550L1100,405L870,310Z" fill="#128a14"/>
<path d="M850,290C900,300 1100,340 1262,380L1270,378L850,282Z" fill="#35b535"/>
<path d="M850,288L885,315" stroke="#60d860" stroke-width="6"/>
<path d="M1075,552L1098,582" stroke="#55d055" stroke-width="6"/>
<path d="M1090,405L1100,405L1075,550L1065,520Z" fill="#0a5a0a"/>
<!-- tooth -->
<path d="M1285,590L1385,635L1240,695L1230,670Z" fill="#0f7a0f"/>
<!-- lower gully -->
<path d="M1030,960L1100,910L1190,900L1250,900L1300,990L1392,1100L1250,1130L1175,1025L1150,1040L1155,1110L1090,1180L1000,1330L950,1345L880,1290L885,1235L1040,1140L1070,1060Z" fill="#084a08"/>
<path d="M880,1290C870,1250 885,1225 900,1215L1040,1140L1140,1130L1090,1180L1000,1330L950,1345Z" fill="#0a560a"/>
<!-- lower right tooth -->
<path d="M1175,1025L1250,1130L1390,1100L1392,1160L1095,1330L990,1335C1040,1280 1100,1220 1130,1180C1160,1140 1150,1090 1150,1040Z" fill="#0e700e"/>
<path d="M1250,1130L1390,1100L1392,1160L1095,1330L1085,1330C1100,1280 1130,1250 1170,1220Z" fill="#0b5a0b"/>
<!-- tip -->
<path d="M1255,915L1520,935L1510,948L1300,990Z" fill="#0a4f0a"/>
<path d="M1255,915L1510,940L1520,935" stroke="#0f700f" fill="none" stroke-width="3"/>
<!-- lower flute -->
<path d="M520,1105L1060,955L1062,978L555,1132Z" fill="#063f06"/>
<path d="M555,1132L1062,975L1070,1060L1040,1140L900,1215Z" fill="#13921a"/>
<path d="M555,1132L1060,978" stroke="#3ac03a" stroke-width="6"/>
<path d="M545,1130L900,1218L1035,1145" fill="none" stroke="#2eb02e" stroke-width="5"/>
<!-- center ball -->
<ellipse cx="1118" cy="860" rx="28" ry="22" fill="#074a07"/>
<ellipse cx="1150" cy="892" rx="36" ry="32" fill="url(#ball)"/>
</g>
<path d="M954,520L1649,611" stroke="#964a20" stroke-width="1" fill="none"/>

<!-- viewport text -->
<text x="288" y="981" class="w">视角:不保存</text><text x="380" y="981" class="w">WCS:俯视图</text><text x="469" y="981" class="w">刀具/绘图面:俯视图</text>
<text x="315" y="925" style="font-size:11px;font-weight:bold;fill:#2020d0">Z</text>
<path d="M321,932V953" stroke="#2020b0" stroke-width="1.5"/><path d="M322,953L336,952" stroke="#a0a060"/><path d="M322,955L336,956" stroke="#a02020"/>
<text x="338" y="951" style="font-size:10px;font-weight:bold;fill:#20a020">Y</text><text x="338" y="960" style="font-size:10px;font-weight:bold;fill:#d02020">X</text>
<path d="M1530,969H1625M1530.5,957V982M1625.5,957V982" stroke="#d8e870" fill="none"/>
<text x="1572" y="965" style="fill:#d030e0;font-weight:bold;font-size:11.5px">4.253</text>
<text x="1553" y="981" style="fill:#c0c0c0;font-weight:bold">公制</text>

<!-- right toolbar -->
<path d="M1650,403.5H1676M1656,639.5H1676M1656,713.5H1676M1656,764.5H1676" stroke="#aca899"/>
<g transform="translate(1665,191)"><rect x="-8" y="-8" width="16" height="16" rx="1" fill="#7a1a1a"/><path d="M-5,-2L2,-8L8,2L2,7L-4,4Z" fill="#f08030"/></g>
<g transform="translate(1665,212)"><path d="M-7,-8h5v5h-5zM-7,-2h5v5h-5zM-7,4h5v4h-5z" fill="#fff" stroke="#a01890" stroke-width="1.4"/><path d="M4,-8h4v5h-4z" fill="#e0a020"/><path d="M4,-2h4v5h-4z" fill="#60a030"/><path d="M4,4h4v4h-4z" fill="#2a78c8"/><path d="M-1,0h4" stroke="#1070c0" stroke-width="1.6"/></g>
<g transform="translate(1665,235)"><use href="#wire" stroke="#6a7a40"/></g>
<g transform="translate(1665,257)"><path d="M0,0L7,-4V5L0,9Z" fill="#60a030"/><use href="#wire" stroke="#4a6a20"/></g>
<g transform="translate(1665,279)"><path d="M-8,4H0M-4,0V8" stroke="#334a78" stroke-width="2.4"/></g><text x="1666" y="284" class="s" style="font-size:14px;font-weight:bold;fill:#d03020">?</text>
<g transform="translate(1665,301)"><rect x="-8" y="-7" width="16" height="14" fill="#2a88d8" stroke="#10508a"/><rect x="-5" y="-1" width="4" height="6" fill="#d8ecf8"/><rect x="1" y="-4" width="4" height="9" fill="#d8ecf8"/></g>
<g transform="translate(1665,323)"><path d="M4,-8H-7V8H4" fill="none" stroke="#18a030" stroke-width="3"/><path d="M-2,-2H3V-4L7,0L3,4V2H-2Z" fill="#7a1a90"/></g>
<use href="#pen" transform="translate(1665,344)"/>
<path d="M1657,360L1670,373" stroke="#111" stroke-width="1.5"/><text x="1664" y="370" class="s" style="font-size:13px;font-weight:bold;fill:#d03020">?</text>
<g transform="translate(1665,388)"><path d="M-3,-4L8,4L3,5L5,9L2,9L-1,5L-3,8Z" fill="#222"/><ellipse cx="-4" cy="5" rx="4" ry="3" fill="none" stroke="#555"/><path d="M-7,-7L-2,-4" stroke="#e0b020" stroke-width="2"/></g>
<g transform="translate(1665,426)"><path d="M-8,-8V8M8,-8V8" stroke="#8a88a0"/><path d="M-6,0H7" stroke="#406090" stroke-width="2.4"/><path d="M-7,-3L-2,-8" stroke="#e0a020" stroke-width="1.6"/></g>
<g transform="translate(1665,448)"><path d="M-8,4C-8,-5 0,-8 8,-4L7,6C3,2 -2,2 -8,4Z" fill="#b8d0e8" stroke="#5070a0"/><path d="M-8,7C-4,3 2,8 8,5" fill="none" stroke="#c02030" stroke-width="1.5"/></g>
<path d="M1662,463h6v4h4v7h-4v4h-6v-4h-5v-7h5z" fill="#30a030" stroke="#177017"/>
<g transform="translate(1665,492)"><path d="M-7,7L6,-6" stroke="#1b8a1b" stroke-width="1.4"/><path d="M-8,-2L-3,-7" stroke="#e0a020" stroke-width="1.6"/><path d="M3,-7H8M5.5,-9V-4M-9,7H-4M-6.5,4V10" stroke="#444"/></g>
<circle cx="1665" cy="514" r="7" fill="none" stroke="#1b8a1b" stroke-width="1.2"/>
<path d="M1658,545V539H1671V530" fill="none" stroke="#118a2a" stroke-width="2.6"/><path d="M1659,533L1664,529" stroke="#e0a020" stroke-width="1.6"/>
<g transform="translate(1665,557)" fill="none" stroke="#d83020" stroke-width="2"><rect x="-7" y="-7" width="14" height="14"/><path d="M-7,0H7M0,-7V7" stroke-width="1.6"/></g>
<g transform="translate(1665,579)"><path d="M-7,2L1,-6L8,-2V3L1,8L-7,4Z" fill="#1f78d0"/><path d="M-7,2L1,-2L8,-2" stroke="#a0c8f0" fill="none"/></g>
<g transform="translate(1665,602)" fill="none" stroke="#1f78b8" stroke-width="1.1"><circle r="7"/><ellipse rx="3.2" ry="7"/><path d="M-7,0H7"/></g>
<g transform="translate(1665,623)"><circle r="7" fill="#e6e3d4" stroke="#aca899" stroke-width="2.2"/><path d="M-5,5L5,-5" stroke="#aca899" stroke-width="2.2"/></g>
<g transform="translate(1665,653)"><rect x="1" y="-8" width="7" height="7" fill="#6010e0"/><rect x="-7" y="1" width="6" height="7" fill="#8a8a8a" stroke="#222"/><path d="M-7,-3L-2,-8" stroke="#e0a020" stroke-width="1.6"/></g>
<g transform="translate(1665,675)"><rect x="1" y="-8" width="7" height="7" fill="#a0a0a0" stroke="#222"/><rect x="-7" y="1" width="7" height="7" fill="#c01030"/><path d="M-7,-3L-2,-8" stroke="#e0a020" stroke-width="1.6"/></g>
<g transform="translate(1665,697)"><rect x="-8" y="-8" width="6" height="16" fill="#fff" stroke="#a01890" stroke-width="1.2"/><path d="M-2,-6L8,0L-2,6Z" fill="#50b050"/></g>
<g transform="translate(1665,728)"><rect x="-6" y="-4" width="13" height="10" fill="#111"/><rect x="-5" y="-3" width="3.5" height="4" fill="#e0d020"/><rect x="-1" y="-3" width="3.5" height="4" fill="#20a040"/><rect x="3" y="-3" width="3.5" height="4" fill="#2040d0"/><rect x="-5" y="1" width="3.5" height="4" fill="#e02020"/><rect x="-1" y="1" width="3.5" height="4" fill="#a020c0"/><rect x="3" y="1" width="3.5" height="4" fill="#20a0d0"/><path d="M-8,-6L-4,-9" stroke="#e0a020" stroke-width="1.6"/></g>
<g transform="translate(1665,750)"><rect x="-6" y="-4" width="13" height="11" fill="#fff" stroke="#111" stroke-width="1.4"/><rect x="-6" y="-4" width="13" height="4" fill="#f0e080"/><path d="M-8,-5L-3,-9" stroke="#e0a020" stroke-width="1.6"/></g>

<!-- status bar -->
<path d="M0,994H1680" stroke="#aca899"/><path d="M0,995H1680" stroke="#fff"/>
<rect x="1649" y="168" width="1" height="826" fill="#fff"/>
<text x="2" y="1012">帮助, 按 <tspan style="font-size:9.5px">Alt+H.</tspan></text>
<g fill="#f0eee0" stroke="#cfcbb8"><rect x="762.5" y="999.5" width="24" height="18" rx="2"/><rect x="794.5" y="999.5" width="59" height="18" rx="2"/><rect x="874.5" y="999.5" width="26" height="18" rx="2"/><rect x="1114.5" y="999.5" width="34" height="18" rx="2"/><rect x="1314.5" y="999.5" width="37" height="18" rx="2"/><rect x="1532.5" y="999.5" width="44" height="18" rx="2"/><rect x="1583.5" y="999.5" width="49" height="18" rx="2"/><rect x="1638.5" y="999.5" width="20" height="18" rx="2"/><rect x="1664.5" y="999.5" width="20" height="18" rx="2"/></g>
<text x="768" y="1012" style="font-size:11px">3D</text><text x="806" y="1012">屏幕视角</text><text x="875" y="1012">平面</text><text x="906" y="1011" style="font-size:10px">Z</text>
<rect x="923.5" y="999.5" width="111" height="18" fill="#fff" stroke="#7f9db9"/><rect x="926" y="1001" width="89" height="15" fill="#006e00"/><rect x="926" y="1002" width="18" height="13" fill="#3a6cc8"/>
<text x="927" y="1012" style="font-size:11px;fill:#d8e0f0">0.0</text>
<rect x="1018" y="1001" width="15" height="15" fill="#bcd0f4"/><path d="M1022,1007l3.5,3.5l3.5,-3.5" fill="none" stroke="#2a4a8a" stroke-width="2"/>
<rect x="1040" y="999" width="52" height="18" fill="#ff00ff"/><text x="1059" y="1011" style="font-size:11px;fill:#a000a0">13</text>
<rect x="1094" y="999" width="14" height="18" fill="#f0eee0"/><path d="M1096,1005h9l-4.5,8z" fill="#111"/>
<text x="1117" y="1011">层别</text>
<rect x="1149.5" y="999.5" width="160" height="18" fill="#fff" stroke="#7f9db9"/><text x="1152" y="1012" class="s">202201 : 四轴方向</text>
<rect x="1293" y="1001" width="15" height="15" fill="#bcd0f4"/><path d="M1297,1007l3.5,3.5l3.5,-3.5" fill="none" stroke="#2a4a8a" stroke-width="2"/>
<text x="1320" y="1012">属性</text>
<rect x="1358" y="999" width="32" height="19" fill="#fff"/><text x="1361" y="1015">*</text><rect x="1375" y="1001" width="14" height="15" fill="#bcd0f4"/><path d="M1379,1007l3,3l3,-3" fill="none" stroke="#2a4a8a" stroke-width="2"/>
<rect x="1395" y="999" width="64" height="19" fill="#fff" stroke="#b8c8d8"/><rect x="1398" y="1008" width="41" height="3" fill="#111"/><rect x="1443" y="1001" width="15" height="15" fill="#bcd0f4"/><path d="M1447,1007l3,3l3,-3" fill="none" stroke="#2a4a8a" stroke-width="2"/>
<rect x="1463" y="999" width="63" height="19" fill="#fff" stroke="#b8c8d8"/><rect x="1466" y="1009" width="41" height="1" fill="#111"/><rect x="1510" y="1001" width="15" height="15" fill="#bcd0f4"/><path d="M1514,1007l3,3l3,-3" fill="none" stroke="#2a4a8a" stroke-width="2"/>
<text x="1545" y="1012" style="font-size:11px">WCS</text><text x="1596" y="1012">群組</text><text x="1645" y="1012">!</text><text x="1671" y="1012">?</text>

<!-- taskbar -->
<rect x="0" y="1020" width="1680" height="30" fill="url(#tk)"/>
<path d="M0,1020H91C96,1024 97,1042 91,1050H0Z" fill="url(#st)"/>
<g transform="translate(19,1035)"><path d="M-8,-7C-5,-9 -3,-8 -1,-7L-2,-1C-4,-2 -6,-2 -9,-1Z" fill="#e84c1c"/><path d="M1,-7C3,-6 6,-5 9,-7L8,-1C5,0 3,0 0,-1Z" fill="#60b030"/><path d="M-9,1C-6,0 -4,0 -2,1L-3,7C-5,6 -7,6 -10,7Z" fill="#2c70e0"/><path d="M0,1C3,2 5,2 8,1L7,7C4,8 2,8 -1,7Z" fill="#f0c020"/></g>
<text x="36" y="1042" class="s" style="font-size:20px;font-style:italic;fill:#fff">开始</text>
<text x="111" y="1041" class="s" style="font-size:18px;font-style:italic;font-weight:bold;fill:#bfe4ff">e</text>
<circle cx="140" cy="1035" r="6.5" fill="#e8f0f8" stroke="#6a90c0"/><circle cx="140" cy="1035" r="3" fill="#2a70c0"/>
<g transform="translate(161,1035)"><ellipse cy="-2" rx="5" ry="6" fill="#111"/><ellipse cy="1" rx="3.5" ry="3.5" fill="#fff"/><path d="M-6,7L0,4L6,7Z" fill="#e83020"/><path d="M-3,-2h6" stroke="#f0c020"/></g>
<text x="183" y="1030" class="s" style="font-size:11px;fill:#cfe0ff">»</text>
<g fill="url(#tb2)"><rect x="199" y="1024" width="157" height="23" rx="2"/><rect x="518" y="1024" width="159" height="23" rx="2"/><rect x="679" y="1024" width="159" height="23" rx="2"/><rect x="840" y="1024" width="157" height="23" rx="2"/></g>
<rect x="358" y="1024" width="159" height="23" rx="2" fill="#1f4fae"/>
<path d="M208,1031H213L215,1033H222V1043H208Z" fill="#f8d868" stroke="#a08020" stroke-width=".6"/>
<path d="M527,1031H532L534,1033H541V1043H527Z" fill="#f8d868" stroke="#a08020" stroke-width=".6"/>
<path d="M370,1042L375,1035L370,1027H374L378,1032L382,1026H384L379,1035L384,1043H380L376,1037L372,1043Z" fill="#e8e8f0"/>
<rect x="688" y="1028" width="12" height="15" fill="#e8f0fa" stroke="#203a70"/><path d="M690,1032h8M690,1035h8M690,1038h8" stroke="#2a5ab0"/>
<g transform="translate(855,1036)"><circle cx="-1" cy="-3" r="5" fill="#e84030"/><circle cx="-3" cy="2" r="5" fill="#f0c020"/><circle cx="2" cy="3" r="5" fill="#40a040"/><circle cx="2" cy="-2" r="4" fill="#9040c0"/><circle r="2.5" fill="#fff"/></g>
<g>
<text x="227" y="1040" style="font-size:10.5px;fill:#eef">F:\徐志伟\HD-160...</text>
<text x="388" y="1040" style="font-size:10.5px;fill:#eef">Mastercam 铣削 X...</text>
<text x="547" y="1040" style="font-size:11px;fill:#eef">E:\新建文件夹 (2)</text>
<text x="707" y="1040" style="font-size:11.5px;fill:#eef">三维网最新网址20...</text>
<text x="868" y="1040" style="font-size:10.5px;fill:#eef">求助 - MasterCAM...</text>
</g>
<rect x="1532" y="1020" width="148" height="30" fill="url(#try)"/>
<path d="M1532,1020V1050" stroke="#0a3a8a"/>
<circle cx="1547" cy="1035" r="6" fill="#50b030"/><circle cx="1547" cy="1035" r="3" fill="#e8c030"/>
<text x="1638" y="1040" style="font-size:11px;fill:#dfefff">19:54</text>
<text x="1460" y="1043" class="s" style="font-size:17px;font-weight:bold;fill:#fff;stroke:#e01010;stroke-width:2.4;paint-order:stroke">三维网</text>
<text x="1512" y="1043" class="s" textLength="156" lengthAdjust="spacingAndGlyphs" style="font-size:17px;font-weight:bold;fill:#fff;stroke:#e01010;stroke-width:2.4;paint-order:stroke">www.3dportal.cn</text>
</svg>
</body></html>
